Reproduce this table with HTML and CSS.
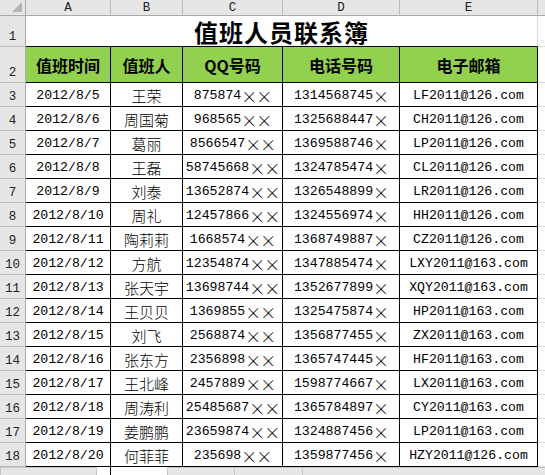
FILE: index.html
```html
<!DOCTYPE html>
<html lang="zh-CN">
<head>
<meta charset="utf-8">
<title>值班人员联系簿</title>
<link rel="stylesheet" href="styles.css">
</head>
<body>
<div class="sheet">
  <div class="corner"><span class="tri"></span></div>
  <div class="ch">A</div><div class="ch">B</div><div class="ch">C</div><div class="ch">D</div><div class="ch">E</div><div class="ch chf"></div>

  <div class="rh">1</div>
  <div class="title">值班人员联系簿</div>
  <div class="c cf"></div>

  <div class="rh">2</div>
  <div class="th">值班时间</div><div class="th">值班人</div><div class="th">QQ号码</div><div class="th">电话号码</div><div class="th">电子邮箱</div>
  <div class="c cf"></div>

  <div class="rh">3</div><div class="td m">2012/8/5</div><div class="td n">王荣</div><div class="td m">875874<span class="x">×</span><span class="x">×</span></div><div class="td m">1314568745<span class="x">×</span></div><div class="td m">LF2011@126.com</div><div class="c cf"></div>
  <div class="rh">4</div><div class="td m">2012/8/6</div><div class="td n">周国菊</div><div class="td m">968565<span class="x">×</span><span class="x">×</span></div><div class="td m">1325688447<span class="x">×</span></div><div class="td m">CH2011@126.com</div><div class="c cf"></div>
  <div class="rh">5</div><div class="td m">2012/8/7</div><div class="td n">葛丽</div><div class="td m">8566547<span class="x">×</span><span class="x">×</span></div><div class="td m">1369588746<span class="x">×</span></div><div class="td m">LP2011@126.com</div><div class="c cf"></div>
  <div class="rh">6</div><div class="td m">2012/8/8</div><div class="td n">王磊</div><div class="td m">58745668<span class="x">×</span><span class="x">×</span></div><div class="td m">1324785474<span class="x">×</span></div><div class="td m">CL2011@126.com</div><div class="c cf"></div>
  <div class="rh">7</div><div class="td m">2012/8/9</div><div class="td n">刘泰</div><div class="td m">13652874<span class="x">×</span><span class="x">×</span></div><div class="td m">1326548899<span class="x">×</span></div><div class="td m">LR2011@126.com</div><div class="c cf"></div>
  <div class="rh">8</div><div class="td m">2012/8/10</div><div class="td n">周礼</div><div class="td m">12457866<span class="x">×</span><span class="x">×</span></div><div class="td m">1324556974<span class="x">×</span></div><div class="td m">HH2011@126.com</div><div class="c cf"></div>
  <div class="rh">9</div><div class="td m">2012/8/11</div><div class="td n">陶莉莉</div><div class="td m">1668574<span class="x">×</span><span class="x">×</span></div><div class="td m">1368749887<span class="x">×</span></div><div class="td m">CZ2011@126.com</div><div class="c cf"></div>
  <div class="rh">10</div><div class="td m">2012/8/12</div><div class="td n">方航</div><div class="td m">12354874<span class="x">×</span><span class="x">×</span></div><div class="td m">1347885474<span class="x">×</span></div><div class="td m">LXY2011@163.com</div><div class="c cf"></div>
  <div class="rh">11</div><div class="td m">2012/8/13</div><div class="td n">张天宇</div><div class="td m">13698744<span class="x">×</span><span class="x">×</span></div><div class="td m">1352677899<span class="x">×</span></div><div class="td m">XQY2011@163.com</div><div class="c cf"></div>
  <div class="rh">12</div><div class="td m">2012/8/14</div><div class="td n">王贝贝</div><div class="td m">1369855<span class="x">×</span><span class="x">×</span></div><div class="td m">1325475874<span class="x">×</span></div><div class="td m">HP2011@163.com</div><div class="c cf"></div>
  <div class="rh">13</div><div class="td m">2012/8/15</div><div class="td n">刘飞</div><div class="td m">2568874<span class="x">×</span><span class="x">×</span></div><div class="td m">1356877455<span class="x">×</span></div><div class="td m">ZX2011@163.com</div><div class="c cf"></div>
  <div class="rh">14</div><div class="td m">2012/8/16</div><div class="td n">张东方</div><div class="td m">2356898<span class="x">×</span><span class="x">×</span></div><div class="td m">1365747445<span class="x">×</span></div><div class="td m">HF2011@163.com</div><div class="c cf"></div>
  <div class="rh">15</div><div class="td m">2012/8/17</div><div class="td n">王北峰</div><div class="td m">2457889<span class="x">×</span><span class="x">×</span></div><div class="td m">1598774667<span class="x">×</span></div><div class="td m">LX2011@163.com</div><div class="c cf"></div>
  <div class="rh">16</div><div class="td m">2012/8/18</div><div class="td n">周涛利</div><div class="td m">25485687<span class="x">×</span><span class="x">×</span></div><div class="td m">1365784897<span class="x">×</span></div><div class="td m">CY2011@163.com</div><div class="c cf"></div>
  <div class="rh">17</div><div class="td m">2012/8/19</div><div class="td n">姜鹏鹏</div><div class="td m">23659874<span class="x">×</span><span class="x">×</span></div><div class="td m">1324887456<span class="x">×</span></div><div class="td m">LP2011@163.com</div><div class="c cf"></div>
  <div class="rh">18</div><div class="td m">2012/8/20</div><div class="td n">何菲菲</div><div class="td m">235698<span class="x">×</span><span class="x">×</span></div><div class="td m">1359877456<span class="x">×</span></div><div class="td m">HZY2011@126.com</div><div class="c cf"></div>
</div>
<div class="footer">
  <div class="fnav"></div>
  <div class="fgap"><span class="fline"></span></div>
  <div class="fbar"><span class="fseg s1"></span><span class="fseg s2"></span><span class="fseg s3"></span></div>
</div>
</body>
</html>
```
FILE: styles.css
```css
* { box-sizing: border-box; }
html, body { margin: 0; padding: 0; background: #fff; overflow: hidden; }
body { width: 545px; height: 475px; }

.sheet {
  display: grid;
  grid-template-columns: 26px 85px 72px 100px 117px 138px 1fr;
  grid-template-rows: 16px 31px 36px repeat(16, 24px);
  width: 545px;
}

.corner, .ch, .rh {
  background: #e6e6e6;
  border-right: 1px solid #bcbcbc;
  border-bottom: 1px solid #bcbcbc;
  color: #222;
}
.corner { display: flex; align-items: flex-end; justify-content: flex-end; padding: 0 3px 3px 0; border-right-color: #a9a9a9; border-bottom-color: #a9a9a9; }
.tri { width: 0; height: 0; border-left: 10px solid transparent; border-bottom: 10px solid #b4b4b4; }

.ch {
  display: flex; align-items: center; justify-content: center;
  font-family: "Liberation Mono", monospace; font-size: 12.5px;
  border-bottom-color: #a9a9a9;
}
.chf { border-right: none; }

.rh {
  display: flex; align-items: flex-end; justify-content: center;
  padding-bottom: 2px;
  font-family: "Liberation Mono", monospace; font-size: 12.5px;
  border-right-color: #a9a9a9;
}

.c { border-right: 1px solid #d9d9d9; border-bottom: 1px solid #d9d9d9; }
.cf { border-right: none; }

.title {
  grid-column: 2 / 7;
  display: flex; align-items: center; justify-content: center;
  border-bottom: 1px solid #000;
  border-right: 1px solid #d9d9d9;
  font-family: "Noto Sans CJK SC", sans-serif; font-weight: 700; font-size: 24px;
  letter-spacing: 1px; color: #000;
  padding-top: 1px;
}

.th {
  background: #92d050;
  border-right: 1px solid #000; border-bottom: 1px solid #000;
  display: flex; align-items: center; justify-content: center;
  font-family: "Noto Sans CJK SC", sans-serif; font-weight: 700; font-size: 16px; color: #000;
}

.td {
  border-right: 1px solid #000; border-bottom: 1px solid #000;
  display: flex; align-items: center; justify-content: center;
  white-space: nowrap; overflow: hidden; color: #000;
  padding-top: 2px;
}
.m { font-family: "Liberation Mono", monospace; font-size: 13.2px; }
.n { font-family: "Noto Sans CJK SC", sans-serif; font-size: 15px; font-weight: 300; }
.x {
  display: inline-block; width: 15px; text-align: center;
  font-family: "Noto Sans CJK SC", sans-serif; font-size: 16px; font-weight: 300;
}

.footer { display: flex; height: 8px; width: 545px; }
.fnav { width: 97px; background: #e6e6e6; border: 1px solid #c6c6c6; border-bottom: none; }
.fgap { width: 70px; background: #fff; display: flex; padding-left: 13px; }
.fline { width: 1px; background: #000; }
.fbar { flex: 1; background: #e6e6e6; border-top: 1px solid #c6c6c6; border-left: 1px solid #c6c6c6; display: flex; }
.fseg { border-right: 1px solid #c6c6c6; }
.s1 { width: 67px; }
.s2 { width: 68px; }
.s3 { width: 0; border-right: none; }
```
